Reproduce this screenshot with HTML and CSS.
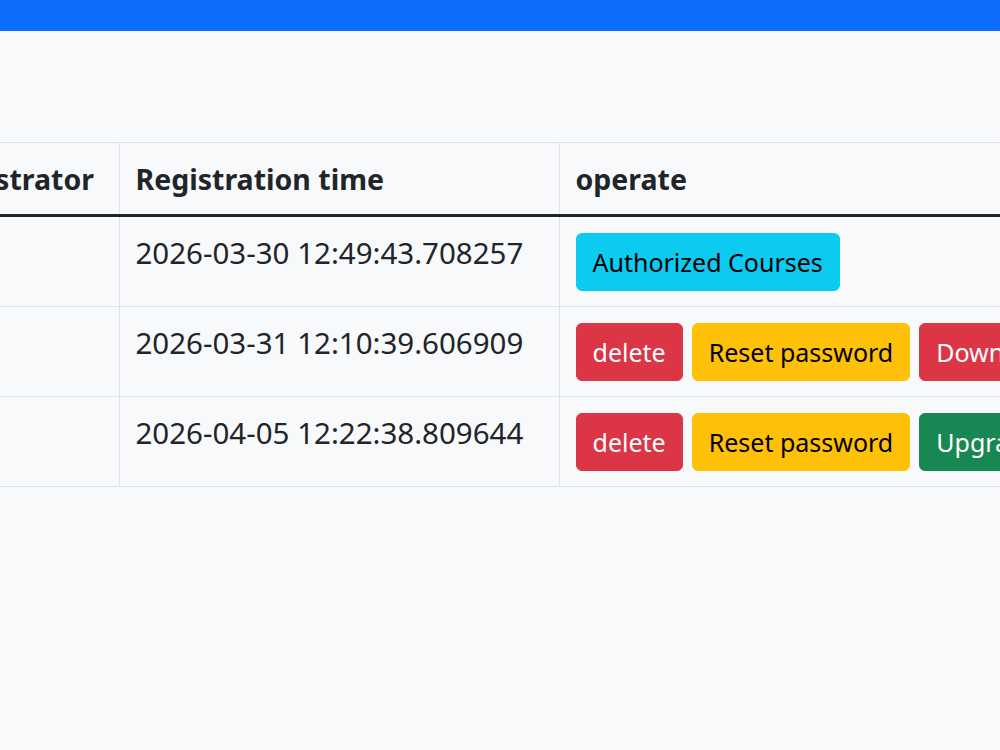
FILE: index.html
```html
<!DOCTYPE html>
<html lang="en">

<head>
 <meta charset="UTF-8">
 <meta name="viewport" content="width=device-width, initial-scale=1.0">
 <title>User management</title>
 <link rel="stylesheet" href="styles.css">
</head>

<body>
   <div class="topbar"></div>
   <div id="wrapper">
      <div class="table_scroll">
         <table class="user_table">
            <colgroup>
               <col class="col_admin">
               <col class="col_time">
               <col class="col_operate">
            </colgroup>
            <thead>
               <tr>
                  <th>Administrator</th>
                  <th>Registration time</th>
                  <th>operate</th>
               </tr>
            </thead>
            <tbody>
               <tr>
                  <td></td>
                  <td>2026-03-30 12:49:43.708257</td>
                  <td>
                     <div class="btn_row">
                        <button class="btn btn_info">Authorized Courses</button>
                     </div>
                  </td>
               </tr>
               <tr>
                  <td></td>
                  <td>2026-03-31 12:10:39.606909</td>
                  <td>
                     <div class="btn_row">
                        <button class="btn btn_danger">delete</button>
                        <button class="btn btn_warning">Reset password</button>
                        <button class="btn btn_danger">Downgrade</button>
                     </div>
                  </td>
               </tr>
               <tr>
                  <td></td>
                  <td>2026-04-05 12:22:38.809644</td>
                  <td>
                     <div class="btn_row">
                        <button class="btn btn_danger">delete</button>
                        <button class="btn btn_warning">Reset password</button>
                        <button class="btn btn_success">Upgrade</button>
                     </div>
                  </td>
               </tr>
            </tbody>
         </table>
      </div>
   </div>
</body>

</html>
```

FILE: styles.css
```css
html, body { margin: 0; padding: 0; }
body { background: #f8f9fa; color: #212529; font-family: "Noto Sans", "Open Sans", sans-serif; overflow: hidden; width: 1000px; height: 750px; }
.topbar { height: 31px; background: #0d6efd; }
#wrapper { padding-top: 111px; }
.table_scroll { overflow: hidden; width: 1000px; }
.user_table { border-collapse: collapse; table-layout: fixed; width: 1441px; margin-left: -122px; }
.col_admin { width: 241px; }
.col_time { width: 440px; }
.col_operate { width: 760px; }
.user_table th, .user_table td { border: 1px solid #dee2e6; text-align: left; vertical-align: top; }
.user_table th { font-size: 28.5px; font-weight: 700; line-height: 45px; padding: 14px 16px 12px; border-bottom: 3px solid #212529; }
.user_table td { font-size: 29.5px; line-height: 39px; padding: 16px 15px 15px 16px; }
.user_table tr > :first-child { border-left: 0; }
.btn_row { display: flex; gap: 9px; white-space: nowrap; }
.btn { font-family: inherit; font-size: 25px; height: 58px; line-height: 56px; padding: 0 16px; border: 1px solid transparent; border-radius: 6px; }
.btn_info { background: #0dcaf0; border-color: #0dcaf0; color: #000; }
.btn_danger { background: #dc3545; border-color: #dc3545; color: #fff; }
.btn_warning { background: #ffc107; border-color: #ffc107; color: #000; }
.btn_success { background: #198754; border-color: #198754; color: #fff; }
```
